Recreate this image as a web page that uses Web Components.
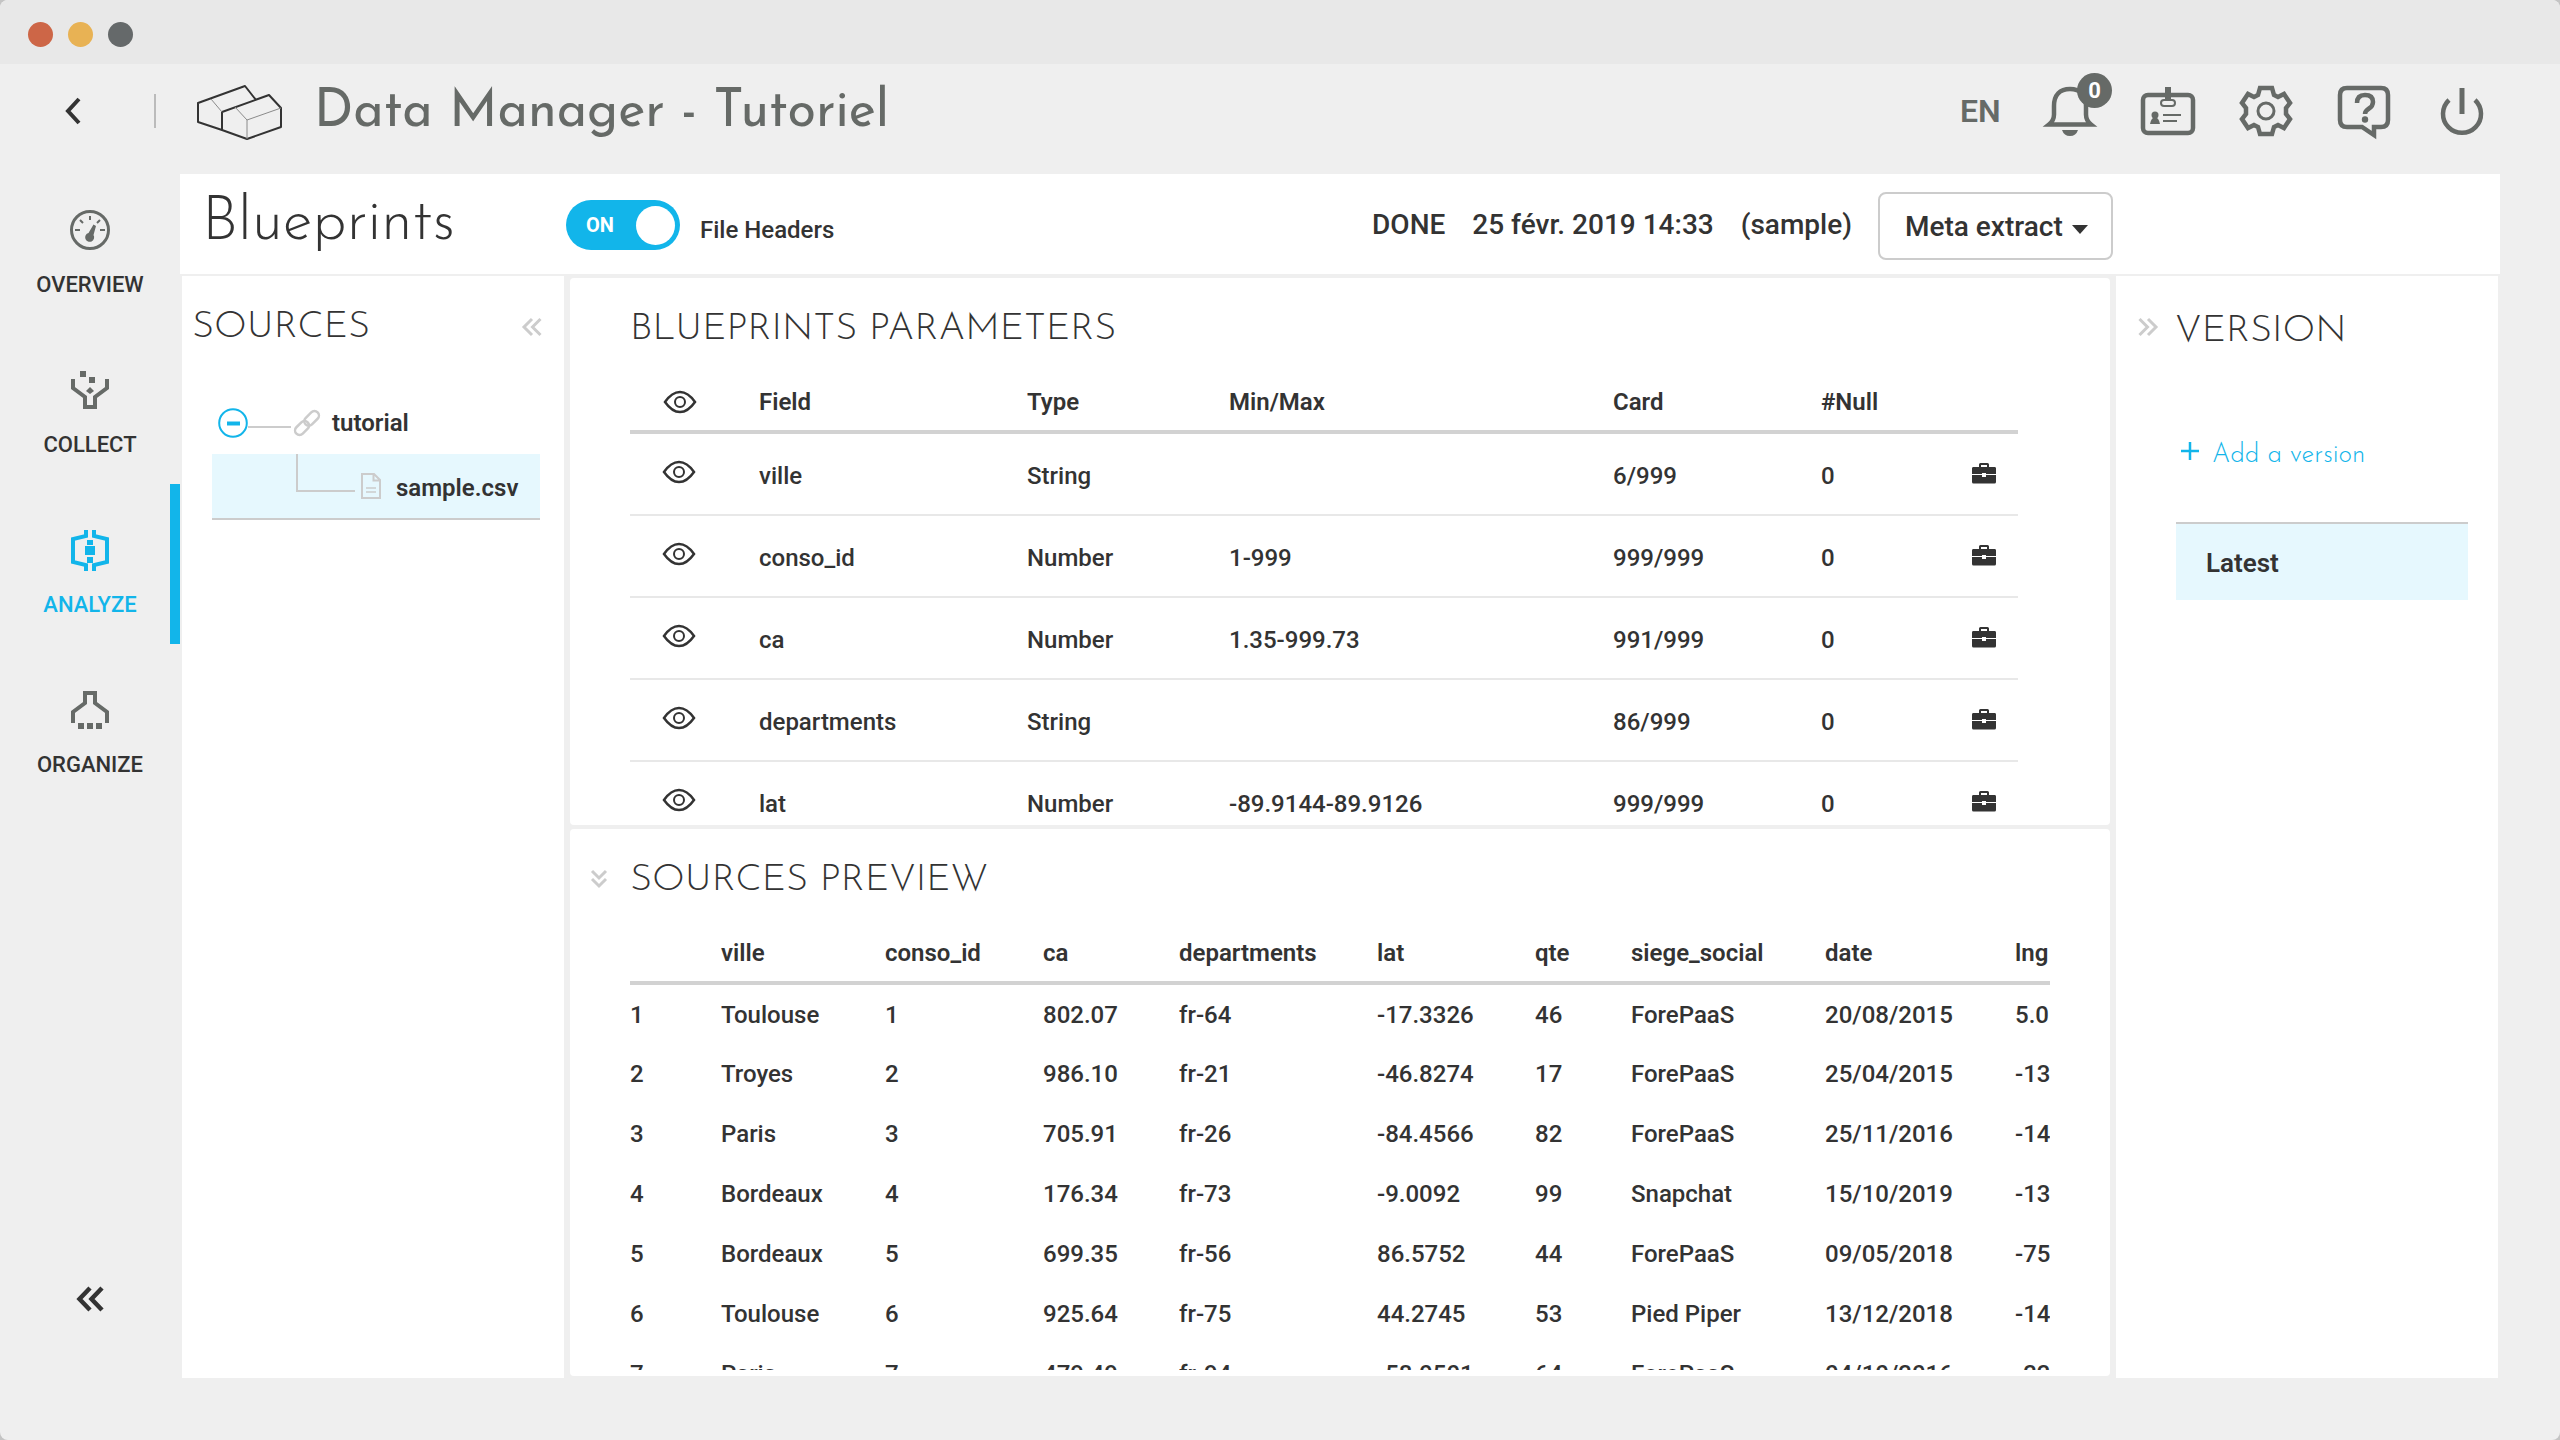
<!DOCTYPE html>
<html lang="en">
<head>
<meta charset="utf-8">
<title>Data Manager - Tutoriel</title>
<style>
  html, body { margin: 0; height: 100%; background: #c4c4c4; }
  body {
    --ink: #333; --muted: #666a67; --accent: #12b5ea; --line: #d2d2d2;
    --page: #efefef; --tint: #e6f8fe;
    --display: "Josefin Sans", Lato, sans-serif;
    font: 500 24px/32px Roboto, sans-serif; color: var(--ink);
  }
</style>
</head>
<body>
<dm-window>
  <dm-topbar slot="top" heading="Data Manager - Tutoriel"></dm-topbar>
  <dm-nav slot="nav">
    <dm-nav-item icon="gauge">OVERVIEW</dm-nav-item>
    <dm-nav-item icon="funnel">COLLECT</dm-nav-item>
    <dm-nav-item icon="analyze" active>ANALYZE</dm-nav-item>
    <dm-nav-item icon="organize">ORGANIZE</dm-nav-item>
  </dm-nav>
  <dm-toolbar slot="main"></dm-toolbar>
  <dm-workspace slot="main">
    <dm-sources slot="left"></dm-sources>
    <dm-panel slot="center" heading="BLUEPRINTS PARAMETERS"><dm-params></dm-params></dm-panel>
    <dm-panel slot="center" class="preview" heading="SOURCES PREVIEW" collapsible><dm-preview></dm-preview></dm-panel>
    <dm-versions slot="right"></dm-versions>
  </dm-workspace>
</dm-window>

<script>
const ICONS = {
  back: [18, 28, '<path d="M15 2 4 14l11 12" fill="none" stroke="currentColor" stroke-width="4"/>'],
  logo: [88, 58, '<g fill="none" stroke="#333" stroke-width="2" stroke-linejoin="round"><path d="M26 48 2 40V21L49 4l11 14"/><path d="M26 48V30l47-17 12 13v19L51 57Z"/></g><g fill="none" stroke="#8a8a8a" stroke-width="1"><path d="m15 17 11 13M39 25l12 13v19M51 38l34-12"/></g>'],
  bell: [50, 52, '<path d="M4 39.500q5-4 5-10V21C9 10 15 4 25 4s16 6 16 17v8.500q0 6 5 10Z" fill="none" stroke="currentColor" stroke-width="4.500"/><path d="M17 45h16q-2 6-8 6t-8-6Z" fill="currentColor"/>'],
  badge: [54, 50, '<rect x="2" y="9" width="50" height="38" rx="5" fill="none" stroke="currentColor" stroke-width="4.500"/><path d="M24 1h6v12h-6Z" fill="currentColor"/><rect x="20" y="14" width="14" height="6" rx="3" fill="none" stroke="currentColor" stroke-width="2"/><circle cx="14" cy="29" r="3.500" fill="currentColor"/><path d="M9 38q1-6 5-7 4 1 5 7ZM22 28h18v2H22ZM22 34h14v2H22Z" fill="currentColor"/>'],
  gear: [54, 54, '<path d="M21 4h12l2 7 4 2 6-3 6 9-4 5v6l4 5-6 9-6-3-4 2-2 7H21l-2-7-4-2-6 3-6-9 4-5v-6l-4-5 6-9 6 3 4-2Z" fill="none" stroke="currentColor" stroke-width="4.500"/><circle cx="27" cy="27" r="8" fill="none" stroke="currentColor" stroke-width="3"/>'],
  help: [54, 52, '<path d="M10 3h34q7 0 7 7v25q0 7-7 7h-7v8l-12-8H10q-7 0-7-7V10q0-7 7-7Z" fill="none" stroke="currentColor" stroke-width="4.500"/><path d="M20 18q0-8 8-8t8 7q0 4-4 6.500t-4 5.500" fill="none" stroke="currentColor" stroke-width="4.500"/><circle cx="28" cy="34.500" r="3.200" fill="currentColor"/>'],
  power: [46, 48, '<path d="M10 13a19 19 0 1 0 26 0" fill="none" stroke="currentColor" stroke-width="4.500"/><path d="M23 1v26" stroke="currentColor" stroke-width="5"/>'],
  gauge: [40, 40, '<circle cx="20" cy="20" r="18.500" fill="none" stroke="currentColor" stroke-width="3"/><path d="M20 6v4M10 10l3 3M30 10l-3 3M5 20h5M30 20h5" stroke="currentColor" stroke-width="2"/><path d="M23.500 14.500 26 16l-2.500 9a4.500 4.500 0 1 1-5-2Z" fill="currentColor"/>'],
  funnel: [40, 40, '<path d="M3 9v9l12 9v10h10V27l12-9V9" fill="none" stroke="currentColor" stroke-width="4"/><path d="M10 1h6v6h-6ZM19 7h6v6h-6ZM20 17l4 4-4 3-4-3Z" fill="currentColor"/>'],
  analyze: [40, 44, '<path d="M16 2v6L3 11v23l13 3v6M24 2v6l13 3v23l-13 3v6" fill="none" stroke="currentColor" stroke-width="4"/><path d="M17 12h6v5h-6ZM15 18h10v9H15ZM17 29h6v6h-6Z" fill="currentColor"/>'],
  organize: [40, 40, '<path d="M3 33V22l12-9V3h10v10l12 9v11" fill="none" stroke="currentColor" stroke-width="4"/><path d="M8 33h6v6H8ZM17 33h6v6h-6ZM26 33h6v6h-6Z" fill="currentColor"/>'],
  rewind: [28, 26, '<path d="M14 2 3.500 13 14 24M26 2 15.500 13 26 24" fill="none" stroke="currentColor" stroke-width="4.500"/>'],
  left: [20, 18, '<path d="M10 1 2 9l8 8M18.500 1l-8 8 8 8" fill="none" stroke="currentColor" stroke-width="3"/>'],
  right: [20, 18, '<path d="m1.500 1 8 8-8 8M10 1l8 8-8 8" fill="none" stroke="currentColor" stroke-width="3"/>'],
  down: [18, 20, '<path d="m2 2 7 7 7-7M2 10l7 7 7-7" fill="none" stroke="currentColor" stroke-width="3"/>'],
  eye: [34, 24, '<path d="M2 12Q9 2 17 2t15 10q-7 10-15 10T2 12Z" fill="none" stroke="currentColor" stroke-width="2.500"/><circle cx="17" cy="12" r="5" fill="none" stroke="currentColor" stroke-width="2"/>'],
  case: [26, 22, '<path d="M2 5h6V2.500Q8 1 9.500 1h7Q18 1 18 2.500V5h6q1 0 1 1.500V12H15v-1h-4v1H1V6.500Q1 5 2 5Zm8 0h6V3h-6ZM1 13h10v2h4v-2h10v7q0 1.500-1.500 1.500h-21Q1 21.500 1 20Z" fill="currentColor"/>'],
  link: [28, 28, '<g transform="rotate(-45 14 14)" fill="none" stroke="currentColor" stroke-width="2.500"><rect x="-1" y="9.500" width="16" height="9" rx="4.500"/><rect x="12" y="9.500" width="17" height="9" rx="4.500"/></g>'],
  file: [22, 26, '<path d="M2 1h12l6 6v18H2ZM13.500 1v6.500H20" fill="none" stroke="currentColor" stroke-width="2"/><path d="M6 15h10M6 19h10" stroke="currentColor" stroke-width="1.500"/>'],
  minus: [30, 30, '<circle cx="15" cy="15" r="13.800" fill="none" stroke="currentColor" stroke-width="2"/><path d="M9 15.500h13" stroke="currentColor" stroke-width="4"/>'],
  plus: [18, 18, '<path d="M9 0v18M0 9h18" stroke="currentColor" stroke-width="2.500"/>'],
  caret: [16, 9, '<path d="M0 0h16L8 9Z" fill="currentColor"/>']
};
const BASE = `<style>
  *, *::before { box-sizing: border-box; }
  button, select, input { font: inherit; color: inherit; margin: 0; }
  button { padding: 0; border: 0; background: none; display: block; cursor: pointer; }
  h1, h2, ul { margin: 0; padding: 0; list-style: none; }
  h2 { padding-top: 5px; font: 300 38px/48px var(--display); white-space: nowrap; }
  a { color: inherit; text-decoration: none; }
  table { border-spacing: 0; width: 100%; table-layout: fixed; }
  th, td { padding: 2px 0 0; text-align: left; white-space: nowrap; box-sizing: content-box; }
  th { height: 56px; font-weight: 600; border-bottom: 4px solid var(--line); }
</style>`;
const define = (name, view) => customElements.define(name, class extends HTMLElement {
  connectedCallback() {
    if (!this.shadowRoot) this.attachShadow({ mode: 'open' }).innerHTML = BASE + view(this);
  }
});

define('dm-icon', el => {
  const [w, h, body] = ICONS[el.getAttribute('name')];
  return `<style>:host{display:block;flex:none} svg{display:block;overflow:visible}</style>
    <svg width="${w}" height="${h}" viewBox="0 0 ${w} ${h}" aria-hidden="true">${body}</svg>`;
});

define('dm-window', () => `<style>
  :host { display: flex; flex-direction: column; height: 100vh; background: var(--page); border-radius: 8px; overflow: hidden; }
  .bar { flex: none; display: flex; align-items: center; gap: 15px; height: 64px; padding: 4px 28px 0; background: #e8e8e8; }
  i { width: 25px; height: 25px; border-radius: 50%; background: #65696a; }
  i:nth-child(1) { background: #cd6647; } i:nth-child(2) { background: #e8b254; }
  .body { flex: 1; min-height: 0; display: flex; padding: 0 60px 62px 0; }
  main { flex: 1; min-width: 0; display: flex; flex-direction: column; }
</style>
<div class="bar"><i></i><i></i><i></i></div>
<slot name="top"></slot>
<div class="body"><slot name="nav"></slot><main><slot name="main"></slot></main></div>`);

define('dm-topbar', el => `<style>
  :host { flex: none; display: flex; align-items: center; height: 110px; padding: 0 70px 16px 64px; color: var(--muted); box-sizing: border-box; }
  .back { color: var(--ink); }
  .sep { width: 2px; height: 34px; margin: 0 40px 0 72px; background: #bbb; }
  h1 { flex: 1; margin-left: 30px; padding-top: 4px; font: 400 52px/64px var(--display); white-space: nowrap; }
  .tools { display: flex; align-items: center; gap: 42px; }
  .tools button { position: relative; width: 56px; height: 56px; display: grid; place-items: center; }
  .tools .lang { width: 40px; font-size: 32px; font-weight: 600; }
  .count { position: absolute; right: -14px; top: -10px; width: 35px; height: 35px; border-radius: 50%; background: var(--muted); color: #fff; font: 700 22px/35px Roboto, sans-serif; }
</style>
<button class="back" aria-label="Back"><dm-icon name="back"></dm-icon></button>
<span class="sep"></span>
<dm-icon name="logo"></dm-icon>
<h1>${el.getAttribute('heading')}</h1>
<div class="tools">
  <button class="lang">EN</button>
  <button aria-label="Notifications"><dm-icon name="bell"></dm-icon><span class="count">0</span></button>
  <button aria-label="Account"><dm-icon name="badge"></dm-icon></button>
  <button aria-label="Settings"><dm-icon name="gear"></dm-icon></button>
  <button aria-label="Help"><dm-icon name="help"></dm-icon></button>
  <button aria-label="Log out"><dm-icon name="power"></dm-icon></button>
</div>`);

define('dm-nav', () => `<style>
  :host { flex: none; display: flex; flex-direction: column; width: 180px; }
  nav { display: flex; flex-direction: column; margin-top: -10px; }
  button { margin: auto auto 66px; }
</style>
<nav><slot></slot></nav>
<button aria-label="Collapse menu"><dm-icon name="rewind"></dm-icon></button>`);

define('dm-nav-item', el => `<style>
  :host { display: block; --c: var(--ink); --i: var(--muted); }
  :host([active]) { --c: var(--accent); --i: var(--accent); }
  a { display: flex; flex-direction: column; align-items: center; gap: 19px; height: 160px; padding-top: 44px; border-right: 10px solid transparent; border-left: 10px solid transparent; color: var(--c); font-size: 22px; line-height: 28px; }
  :host([active]) a { border-right-color: var(--accent); }
  .pic { height: 44px; display: grid; place-items: center; color: var(--i); }
</style>
<a href="#"><span class="pic"><dm-icon name="${el.getAttribute('icon')}"></dm-icon></span><slot></slot></a>`);

define('dm-toolbar', () => `<style>
  :host { flex: none; display: flex; align-items: center; height: 100px; padding: 0 387px 0 22px; background: #fff; box-sizing: border-box; font-size: 28px; }
  h1 { width: 364px; font: 300 61px/64px var(--display); }
  label { display: flex; align-items: center; gap: 20px; font-size: 24px; padding-top: 2px; }
  .switch { display: grid; align-items: center; width: 114px; height: 50px; }
  .switch > * { grid-area: 1 / 1; }
  input { appearance: none; width: 114px; height: 50px; border-radius: 25px; background: var(--accent); display: flex; align-items: center; justify-content: flex-end; padding-right: 5px; }
  input::before { content: ""; width: 39px; height: 39px; border-radius: 50%; background: #fff; }
  .on { z-index: 1; padding-left: 20px; color: #fff; font: 700 20px/24px Roboto, sans-serif; }
  .name { padding-top: 10px; }
  .status { display: flex; gap: 27px; margin: 0 26px 0 auto; padding-top: 2px; white-space: nowrap; }
  .pick { display: grid; align-items: center; width: 235px; height: 68px; margin-top: 4px; }
  .pick > * { grid-area: 1 / 1; }
  select { appearance: none; width: 100%; height: 100%; padding: 2px 0 0 25px; border: 2px solid #ccc; border-radius: 8px; background: #fff; }
  .pick dm-icon { justify-self: end; margin-right: 25px; padding-top: 6px; pointer-events: none; }
</style>
<h1>Blueprints</h1>
<label><span class="switch"><input type="checkbox" role="switch" checked><span class="on">ON</span></span><span class="name">File Headers</span></label>
<div class="status"><span>DONE</span><span>25 févr. 2019 14:33</span><span>(sample)</span></div>
<div class="pick"><select aria-label="Action"><option>Meta extract</option></select><dm-icon name="caret"></dm-icon></div>`);

define('dm-workspace', () => `<style>
  :host { flex: 1; min-height: 0; display: flex; gap: 6px; padding: 2px 2px 0; }
  .center { flex: 1; min-width: 0; display: grid; grid-template-rows: minmax(0, 1fr) minmax(0, 1fr); gap: 4px; padding: 2px 0; }
</style>
<slot name="left"></slot><div class="center"><slot name="center"></slot></div><slot name="right"></slot>`);

define('dm-panel', el => `<style>
  :host { display: flex; flex-direction: column; min-width: 0; padding: 23px 92px 0 60px; background: #fff; border-radius: 4px; overflow: hidden; box-sizing: border-box; }
  :host(.preview) { padding: 23px 60px 6px 20px; }
  header { display: flex; align-items: center; gap: 22px; margin-bottom: 18px; }
  header button { color: #ccc; }
  .content { flex: 1; min-height: 0; overflow: hidden; }
  :host(.preview) .content { margin-left: 40px; }
</style>
<header>${el.hasAttribute('collapsible') ? '<button aria-label="Collapse"><dm-icon name="down"></dm-icon></button>' : ''}<h2>${el.getAttribute('heading')}</h2></header>
<div class="content"><slot></slot></div>`);

define('dm-sources', () => `<style>
  :host { flex: none; display: block; width: 382px; padding: 23px 22px 0 10px; background: #fff; box-sizing: border-box; }
  header { display: flex; align-items: center; justify-content: space-between; }
  header button { color: #ccc; padding-top: 2px; }
  ul { padding: 40px 2px 0 20px; font-weight: 600; }
  li { display: flex; align-items: center; }
  .root { height: 62px; }
  .root button { margin-left: 6px; color: var(--accent); }
  .root dm-icon[name=link] { margin: 0 11px 0 2px; color: #ccc; }
  .dash { width: 43px; height: 2px; margin-top: 8px; background: #ccc; }
  .child { height: 66px; background: var(--tint); border-bottom: 2px solid #ccc; }
  .child a { padding-top: 3px; }
  .elbow { align-self: flex-start; width: 59px; height: 38px; margin-left: 84px; border: solid #ccc; border-width: 0 0 2px 2px; }
  .child dm-icon { margin: 0 14px 0 5px; color: #ccc; }
</style>
<header><h2>SOURCES</h2><button aria-label="Collapse sources"><dm-icon name="left"></dm-icon></button></header>
<ul>
  <li class="root"><button aria-label="Fold"><dm-icon name="minus"></dm-icon></button><span class="dash"></span><dm-icon name="link"></dm-icon><a href="#">tutorial</a></li>
  <li class="child"><span class="elbow"></span><dm-icon name="file"></dm-icon><a href="#">sample.csv</a></li>
</ul>`);

define('dm-versions', () => `<style>
  :host { flex: none; display: block; width: 382px; padding: 27px 30px 0 22px; background: #fff; box-sizing: border-box; }
  header { display: flex; align-items: center; gap: 17px; }
  header button { color: #ccc; padding-bottom: 6px; }
  .list { padding-left: 38px; }
  .add { display: flex; align-items: center; gap: 13px; margin: 82px 0 48px 5px; color: var(--accent); font: 300 26px/36px var(--display); }
  .add dm-icon { padding-bottom: 10px; }
  li a { display: block; padding: 22px 30px 20px; background: var(--tint); border-top: 2px solid #ccc; font-size: 26px; font-weight: 600; line-height: 34px; }
</style>
<header><button aria-label="Collapse versions"><dm-icon name="right"></dm-icon></button><h2>VERSION</h2></header>
<div class="list">
  <button class="add"><dm-icon name="plus"></dm-icon>Add a version</button>
  <ul><li><a href="#">Latest</a></li></ul>
</div>`);

const cols = widths => `<colgroup>${widths.map(w => `<col style="width:${w}px">`).join('')}</colgroup>`;
const cells = (tag, row) => row.map(v => `<${tag}>${v}</${tag}>`).join('');

define('dm-params', () => {
  const rows = [
    ['ville', 'String', '', '6/999', '0'],
    ['conso_id', 'Number', '1-999', '999/999', '0'],
    ['ca', 'Number', '1.35-999.73', '991/999', '0'],
    ['departments', 'String', '', '86/999', '0'],
    ['lat', 'Number', '-89.9144-89.9126', '999/999', '0']
  ];
  return `<style>
    :host { display: block; }
    td { height: 76px; padding-top: 4px; border-bottom: 2px solid #e8e8e8; }
    td:first-child { padding: 0 0 4px; }
    td:last-child { padding: 0 0 4px; }
    td:last-child button { margin-top: 2px; }
    td:first-child button { margin-left: 32px; }
    th:first-child dm-icon { margin-left: 33px; }
  </style>
  <table>${cols([129, 268, 202, 384, 208, 150, 47])}
    <thead><tr><th><dm-icon name="eye"></dm-icon></th>${cells('th', ['Field', 'Type', 'Min/Max', 'Card', '#Null', ''])}</tr></thead>
    <tbody>${rows.map(r => `<tr><td><button aria-label="Show ${r[0]}"><dm-icon name="eye"></dm-icon></button></td>${cells('td', r)}<td><button aria-label="Tools for ${r[0]}"><dm-icon name="case"></dm-icon></button></td></tr>`).join('')}</tbody>
  </table>`;
});

define('dm-preview', () => {
  const rows = [
    ['1', 'Toulouse', '1', '802.07', 'fr-64', '-17.3326', '46', 'ForePaaS', '20/08/2015', '5.0'],
    ['2', 'Troyes', '2', '986.10', 'fr-21', '-46.8274', '17', 'ForePaaS', '25/04/2015', '-13'],
    ['3', 'Paris', '3', '705.91', 'fr-26', '-84.4566', '82', 'ForePaaS', '25/11/2016', '-14'],
    ['4', 'Bordeaux', '4', '176.34', 'fr-73', '-9.0092', '99', 'Snapchat', '15/10/2019', '-13'],
    ['5', 'Bordeaux', '5', '699.35', 'fr-56', '86.5752', '44', 'ForePaaS', '09/05/2018', '-75'],
    ['6', 'Toulouse', '6', '925.64', 'fr-75', '44.2745', '53', 'Pied Piper', '13/12/2018', '-14'],
    ['7', 'Paris', '7', '479.49', 'fr-94', '-58.0501', '64', 'ForePaaS', '04/10/2016', '-22']
  ];
  return `<style>
    :host { display: block; }
    td { height: 58px; }
    tbody tr:first-child td { height: 56px; }
  </style>
  <table>${cols([91, 164, 158, 136, 198, 158, 96, 194, 190, 35])}
    <thead><tr>${cells('th', ['', 'ville', 'conso_id', 'ca', 'departments', 'lat', 'qte', 'siege_social', 'date', 'lng'])}</tr></thead>
    <tbody>${rows.map(r => `<tr>${cells('td', r)}</tr>`).join('')}</tbody>
  </table>`;
});
</script>
</body>
</html>
